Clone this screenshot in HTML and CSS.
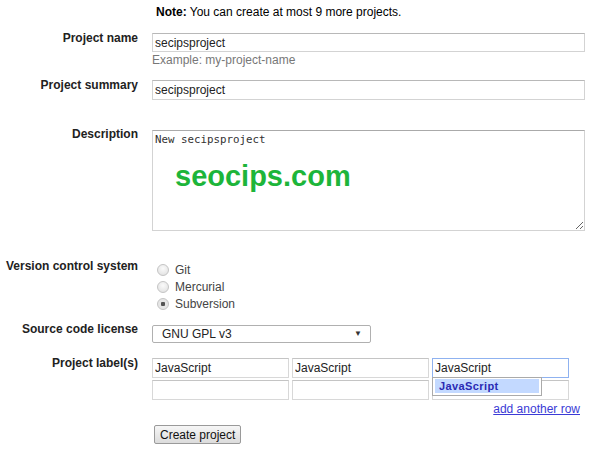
FILE: index.html
```html
<!DOCTYPE html>
<html lang="en">
<head>
    <meta charset="UTF-8">
    <title>Create a new project</title>
    <link rel="stylesheet" href="styles.css">
</head>
<body>
    <form id="createForm">
        <div class="row row-note">
            <div></div>
            <div class="note"><strong>Note:</strong> You can create at most 9 more projects.</div>
        </div>

        <div class="row row-name">
            <label class="field-label">Project name</label>
            <div class="field">
                <input type="text" class="text-input wide" value="secipsproject">
                <div class="hint">Example: my-project-name</div>
            </div>
        </div>

        <div class="row row-summary">
            <label class="field-label">Project summary</label>
            <div class="field">
                <input type="text" class="text-input wide" value="secipsproject">
            </div>
        </div>

        <div class="row row-desc">
            <label class="field-label">Description</label>
            <div class="field desc-wrap">
                <textarea class="desc">New secipsproject</textarea>
                <div class="watermark">seocips.com</div>
            </div>
        </div>

        <div class="row row-vcs">
            <label class="field-label">Version control system</label>
            <div class="field radios">
                <label class="radio"><input type="radio" name="vcs"> Git</label>
                <label class="radio"><input type="radio" name="vcs"> Mercurial</label>
                <label class="radio"><input type="radio" name="vcs" checked> Subversion</label>
            </div>
        </div>

        <div class="row row-license">
            <label class="field-label">Source code license</label>
            <div class="field">
                <div class="select-wrap">
                    <select class="license">
                        <option>GNU GPL v3</option>
                    </select>
                    <span class="select-arrow">&#9660;</span>
                </div>
            </div>
        </div>

        <div class="row row-labels">
            <label class="field-label">Project label(s)</label>
            <div class="field">
                <div class="label-grid">
                    <input type="text" class="text-input label-input" value="JavaScript">
                    <input type="text" class="text-input label-input" value="JavaScript">
                    <div class="ac-wrap">
                        <input type="text" class="text-input label-input focused" value="JavaScript">
                        <div class="autocomplete">
                            <div class="ac-item">JavaScript</div>
                        </div>
                    </div>
                    <input type="text" class="text-input label-input">
                    <input type="text" class="text-input label-input">
                    <input type="text" class="text-input label-input">
                </div>
                <div class="add-row"><a href="#">add another row</a></div>
            </div>
        </div>

        <div class="row row-submit">
            <div></div>
            <div class="field">
                <button type="button" class="submit">Create project</button>
            </div>
        </div>
    </form>
</body>
</html>
```

FILE: styles.css
```css
body {
    font-family: "Liberation Sans", Arial, sans-serif;
    font-size: 12px;
    color: #000;
    background: #fff;
    margin: 0;
}

#createForm {
    padding-top: 4px;
}

.row {
    display: grid;
    grid-template-columns: 138px 432px;
    column-gap: 14px;
    line-height: 16px;
}

.field-label {
    text-align: right;
    font-weight: bold;
    color: #222;
    white-space: nowrap;
}

.note {
    padding-left: 4px;
}

.row-name { margin-top: 10px; }
.row-summary { margin-top: 9px; }
.row-desc { margin-top: 26px; }
.row-vcs { margin-top: 27px; }
.row-license { margin-top: 9px; }
.row-labels { margin-top: 12px; }
.row-submit { margin-top: 8px; }

.text-input {
    font-family: "Liberation Sans", Arial, sans-serif;
    font-size: 12px;
    color: #222;
    box-sizing: border-box;
    height: 19px;
    margin: 0;
    padding: 0 2px;
    border: 1px solid #d3d3d3;
    border-top-color: #b8b8b8;
    outline: none;
    display: block;
}

.wide {
    width: 433px;
    margin-top: 3px;
}

.row-summary .wide {
    height: 20px;
}

.hint {
    color: #777;
}

/* description box with the site stamp laid over it */
.desc-wrap {
    position: relative;
    padding-top: 4px;
}

.desc {
    display: block;
    box-sizing: border-box;
    width: 433px;
    height: 101px;
    margin: 0;
    padding: 2px 2px;
    border: 1px solid #d3d3d3;
    border-top-color: #aaa;
    font-family: "DejaVu Sans Mono", monospace;
    font-size: 10.8px;
    line-height: 14px;
    color: #333;
    resize: both;
}

.watermark {
    position: absolute;
    left: 23px;
    top: 33px;
    font-size: 29px;
    font-weight: bold;
    line-height: 34px;
    color: #1db53a;
}

.radios {
    padding-top: 3px;
}

.radio {
    display: flex;
    align-items: center;
    height: 17px;
    color: #444;
}

.radio input {
    appearance: none;
    -webkit-appearance: none;
    box-sizing: border-box;
    width: 12px;
    height: 12px;
    margin: 0 6px 0 5px;
    border: 1px solid #c4c4c4;
    border-radius: 50%;
    background: radial-gradient(circle at 50% 35%, #fafafa, #dedede);
}

.radio input:checked {
    background: radial-gradient(circle, #555 0 2px, #e6e6e6 2.5px);
}

.select-wrap {
    position: relative;
    width: 219px;
    margin-top: 4px;
}

.license {
    appearance: none;
    -webkit-appearance: none;
    box-sizing: border-box;
    width: 219px;
    height: 18px;
    margin: 0;
    padding: 0 0 0 9px;
    border: 1px solid #b0b0b0;
    border-radius: 2px;
    background: #fff;
    font-family: "Liberation Sans", Arial, sans-serif;
    font-size: 12px;
    color: #222;
}

.select-arrow {
    position: absolute;
    right: 9px;
    top: 3px;
    font-size: 8px;
    line-height: 12px;
    color: #333;
    pointer-events: none;
}

.label-grid {
    display: grid;
    grid-template-columns: 137px 137px 137px;
    column-gap: 3px;
    row-gap: 2px;
    margin-top: 3px;
}

.label-input {
    width: 137px;
    height: 20px;
    border-color: #d8d8d8;
    border-top-color: #c4c4c4;
}

.focused {
    border: 1px solid #8fb2f0;
}

.ac-wrap {
    position: relative;
}

.autocomplete {
    position: absolute;
    left: 0;
    top: 19px;
    width: 110px;
    height: 19px;
    box-sizing: border-box;
    padding: 1px 2px 0 2px;
    background: #fff;
    border: 1px solid #aaa;
    z-index: 2;
}

.ac-item {
    background: #c3d9ff;
    color: #2a2ab4;
    font-size: 11px;
    font-weight: bold;
    line-height: 14px;
    padding-left: 4px;
    letter-spacing: 0.4px;
}

.add-row {
    text-align: right;
    width: 428px;
    margin-top: 1px;
}

.add-row a {
    color: #3b3bd6;
    text-decoration: underline;
}

.submit {
    margin: 0 0 0 2px;
    height: 19px;
    padding: 0 5px;
    font-family: "Liberation Sans", Arial, sans-serif;
    font-size: 12px;
    color: #111;
    border: 1px solid #9a9a9a;
    border-radius: 2px;
    background: linear-gradient(#f6f6f6, #dcdcdc);
}
```
